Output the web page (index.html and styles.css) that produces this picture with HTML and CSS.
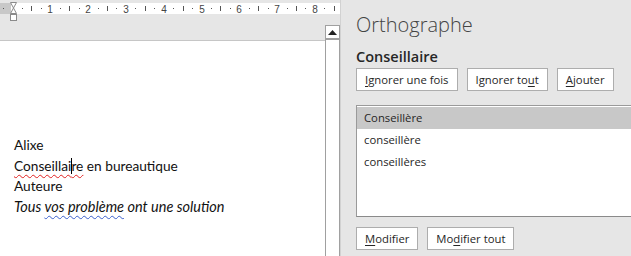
FILE: index.html
```html
<!DOCTYPE html>
<html lang="fr">
<head>
    <meta charset="UTF-8">
    <title>Orthographe</title>
    <link rel="stylesheet" href="styles.css">
</head>
<body>
    <div class="app">
        <div class="doc">
            <div class="ruler-bar">
                <svg class="ruler" width="340" height="25" viewBox="0 0 340 25">
                    <rect x="0" y="3" width="11" height="11" fill="#c8c8c8"/>
                    <rect x="11" y="3" width="329" height="11" fill="#ffffff"/>
                    <rect x="3" y="8" width="1" height="1" fill="#555"/>
                    <g id="ticks" fill="#555"></g>
                    <g class="ruler-nums" font-family="Liberation Sans, Arial, sans-serif" font-size="10" fill="#444" text-anchor="middle">
                        <text x="50" y="13">1</text>
                        <text x="88" y="13">2</text>
                        <text x="126" y="13">3</text>
                        <text x="164" y="13">4</text>
                        <text x="202" y="13">5</text>
                        <text x="239" y="13">6</text>
                        <text x="277" y="13">7</text>
                        <text x="315" y="13">8</text>
                    </g>
                    <!-- marqueur de retrait -->
                    <path d="M10.5 2.5 L16.5 2.5 L13.5 8 L16.5 13.5 L10.5 13.5 L13.5 8 Z" fill="#fff" stroke="#8a8a8a"/>
                    <rect x="10.5" y="14.5" width="6" height="6" fill="#fff" stroke="#8a8a8a"/>
                </svg>
            </div>
            <div class="doc-body">
                <div class="page-col">
                    <div class="page">
                        <p>Alixe</p>
                        <p><span class="err-spell">Conseillai<span class="caret"></span>re</span> en bureautique</p>
                        <p>Auteure</p>
                        <p class="motto">Tous <span class="err-gram">vos problème</span> ont une solution</p>
                    </div>
                </div>
                <div class="scrollbar">
                    <div class="scroll-up">
                        <svg width="9" height="5" viewBox="0 0 9 5"><path d="M0 5 L4.5 0 L9 5 Z" fill="#222"/></svg>
                    </div>
                    <div class="scroll-track"></div>
                </div>
            </div>
        </div>

        <aside class="pane">
            <h1 class="pane-title">Orthographe</h1>
            <div class="word">Conseillaire</div>
            <div class="btn-row">
                <button class="btn"><u>I</u>gnorer une fois</button>
                <button class="btn">Ignorer to<u>u</u>t</button>
                <button class="btn"><u>A</u>jouter</button>
            </div>
            <ul class="suggestions">
                <li class="selected">Conseillère</li>
                <li>conseillère</li>
                <li>conseillères</li>
            </ul>
            <div class="btn-row btn-row-bottom">
                <button class="btn"><u>M</u>odifier</button>
                <button class="btn">Mo<u>d</u>ifier tout</button>
            </div>
        </aside>
    </div>

    <script>
        // graduations de la règle
        const ticks = document.getElementById('ticks');
        const origin = 12.5, unit = 37.8;
        for (let n = 0; n < 9; n++) {
            [0.25, 0.5, 0.75].forEach(f => {
                const x = Math.round(origin + (n + f) * unit);
                if (x > 338) return;
                const r = document.createElementNS('http://www.w3.org/2000/svg', 'rect');
                r.setAttribute('x', x);
                r.setAttribute('width', 1);
                if (f === 0.5) {
                    r.setAttribute('y', 6);
                    r.setAttribute('height', 5);
                } else {
                    r.setAttribute('y', 8);
                    r.setAttribute('height', 1);
                }
                ticks.appendChild(r);
            });
        }
    </script>
</body>
</html>
```

FILE: styles.css
```css
* {
    box-sizing: border-box;
    margin: 0;
    padding: 0;
}

body {
    width: 631px;
    height: 256px;
    overflow: hidden;
    background: #e6e6e6;
    font-family: 'Open Sans', 'Noto Sans', sans-serif;
}

.app {
    display: flex;
    height: 256px;
}

.doc {
    width: 340px;
    flex-shrink: 0;
    display: flex;
    flex-direction: column;
}

.ruler-bar {
    height: 25px;
}

.ruler {
    display: block;
}

.doc-body {
    flex: 1;
    display: flex;
}

.page-col {
    width: 325px;
    padding-top: 15px;
    display: flex;
    flex-direction: column;
}

.page {
    flex: 1;
    background: #ffffff;
    border-top: 1px solid #c6c6c6;
    padding: 94px 0 0 14px;
    font-family: Lato, 'Liberation Sans', sans-serif;
    font-size: 13.7px;
    line-height: 20.5px;
    color: #111;
}

.motto {
    font-style: italic;
    font-size: 14.5px;
}

.err-spell {
    text-decoration: underline wavy #e02020;
    text-decoration-thickness: 1px;
    text-underline-offset: 3px;
}

.err-gram {
    text-decoration: underline wavy #3a5fcd;
    text-decoration-thickness: 1px;
    text-underline-offset: 3px;
}

.caret {
    display: inline-block;
    width: 0;
    height: 16px;
    border-left: 1px solid #000;
    vertical-align: -3px;
    margin-right: -1px;
}

.scrollbar {
    width: 15px;
    display: flex;
    flex-direction: column;
    border-left: 1px solid #a0a0a0;
    border-right: 1px solid #a0a0a0;
    border-top: 1px solid #a0a0a0;
    background: #ffffff;
}

.scroll-up {
    height: 14px;
    display: flex;
    align-items: center;
    justify-content: center;
    border-bottom: 2px solid #a0a0a0;
}

.scroll-track {
    flex: 1;
}

.pane {
    flex: 1;
    border-left: 1px solid #d2d2d2;
    padding: 11px 0 0 15px;
    color: #262626;
    overflow: hidden;
}

.pane-title {
    font-weight: 300;
    font-size: 20px;
    line-height: 28px;
    color: #444;
}

.word {
    margin-top: 8px;
    font-weight: 600;
    font-size: 14.5px;
    line-height: 20px;
    color: #262626;
}

.btn-row {
    display: flex;
    gap: 9px;
    margin-top: 1px;
}

.btn {
    height: 23px;
    padding: 0 8px;
    background: #ffffff;
    border: 1px solid #adadad;
    font-family: inherit;
    font-size: 11.3px;
    color: #262626;
}

.btn u {
    text-underline-offset: 2px;
}

.suggestions {
    list-style: none;
    margin-top: 14px;
    height: 112px;
    background: #ffffff;
    border: 1px solid #9a9a9a;
    border-right: none;
    border-bottom-color: #8a8a8a;
    font-size: 11.3px;
    padding-top: 1px;
}

.suggestions li {
    height: 22px;
    line-height: 22px;
    padding-left: 7px;
}

.suggestions li.selected {
    background: #c8c8c8;
}

.btn-row-bottom {
    margin-top: 10px;
}
```
